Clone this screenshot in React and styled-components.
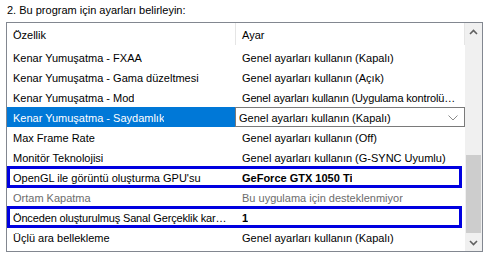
import React from "react"
import styled, { createGlobalStyle } from "styled-components"

const GlobalStyle = createGlobalStyle`
  body {
    margin: 0;
    background: #fff;
    font-family: "Liberation Sans", Arial, sans-serif;
    font-size: 11px;
    color: #000;
  }
`

const rows = [
  { name: "Kenar Yumuşatma - FXAA", value: "Genel ayarları kullanın (Kapalı)" },
  { name: "Kenar Yumuşatma - Gama düzeltmesi", value: "Genel ayarları kullanın (Açık)" },
  { name: "Kenar Yumuşatma - Mod", value: "Genel ayarları kullanın (Uygulama kontrolü…" },
  { name: "Kenar Yumuşatma - Saydamlık", value: "Genel ayarları kullanın (Kapalı)", selected: true },
  { name: "Max Frame Rate", value: "Genel ayarları kullanın (Off)" },
  { name: "Monitör Teknolojisi", value: "Genel ayarları kullanın (G-SYNC Uyumlu)" },
  { name: "OpenGL ile görüntü oluşturma GPU'su", value: "GeForce GTX 1050 Ti", bold: true, marked: true },
  { name: "Ortam Kapatma", value: "Bu uygulama için desteklenmiyor", disabled: true },
  { name: "Önceden oluşturulmuş Sanal Gerçeklik kar…", value: "1", bold: true, marked: true },
  { name: "Üçlü ara bellekleme", value: "Genel ayarları kullanın (Kapalı)" },
]

const Page = styled.div`
  padding: 3px 10px 0 6px;
`

const Title = styled.div`
  height: 19px;
  line-height: 14px;
  padding-left: 1px;
  box-sizing: border-box;
`

const ListBox = styled.div`
  width: 477px;
  height: 230px;
  box-sizing: border-box;
  border: 1px solid #828790;
  display: flex;
  background: #fff;
`

const Table = styled.div`
  flex: 1;
  min-width: 0;
  display: flex;
  flex-direction: column;
`

const HeaderRow = styled.div`
  display: grid;
  grid-template-columns: 229px 229px;
  height: 24px;
`

const HeaderCell = styled.div`
  display: flex;
  align-items: center;
  padding: 1px 0 0 6px;
  box-sizing: border-box;
  border-right: 1px solid #e5e5e5;
  margin-bottom: 2px;
`

const Row = styled.div`
  position: relative;
  display: grid;
  grid-template-columns: 229px 229px;
  height: 20px;
  color: ${(p) => (p.disabled ? "#6d6d6d" : "#000")};

  &::after {
    content: "";
    display: ${(p) => (p.marked ? "block" : "none")};
    position: absolute;
    left: 0;
    right: 3px;
    top: -1px;
    bottom: -1px;
    border: 3px solid #0000e0;
    pointer-events: none;
  }
`

const Cell = styled.div`
  min-width: 0;
  height: 100%;
  box-sizing: border-box;
  padding: 2px 1px 0 6px;
  display: flex;
  align-items: center;
`

const Text = styled.span`
  white-space: nowrap;
  overflow: hidden;
  text-overflow: ellipsis;
  letter-spacing: ${(p) => (p.tight ? "-0.15px" : "normal")};
`

const NameCell = styled(Cell)`
  background: ${(p) => (p.selected ? "#0078d7" : "transparent")};
  color: ${(p) => (p.selected ? "#fff" : "inherit")};
`

const ValueCell = styled(Cell)`
  font-weight: ${(p) => (p.bold ? "bold" : "normal")};
`

const Combo = styled.div`
  min-width: 0;
  height: 100%;
  margin-left: -1px;
  box-sizing: border-box;
  border: 1px solid #7a7a7a;
  display: flex;
  align-items: center;
  justify-content: space-between;
  padding: 1px 6px 0 3px;
`

const ScrollBar = styled.div`
  width: 17px;
  background: #f0f0f0;
  display: flex;
  flex-direction: column;
`

const ArrowButton = styled.div`
  height: 17px;
  display: flex;
  align-items: center;
  justify-content: center;
`

const Track = styled.div`
  flex: 1;
  display: flex;
  flex-direction: column;
  justify-content: flex-end;
  padding-bottom: 1px;
`

const Thumb = styled.div`
  height: 78px;
  margin: 0 1px;
  background: #cdcdcd;
`

const Chevron = ({ up }) => (
  <svg width="9" height="6" viewBox="0 0 9 6">
    <polyline
      points={up ? "1,5 4.5,1.5 8,5" : "1,1 4.5,4.5 8,1"}
      fill="none"
      stroke="#606060"
      strokeWidth="1.6"
    />
  </svg>
)

const ComboChevron = () => (
  <svg width="10" height="6" viewBox="0 0 10 6">
    <polyline points="0.5,0.5 5,5 9.5,0.5" fill="none" stroke="#8a8a8a" strokeWidth="1" />
  </svg>
)

export default function App() {
  return (
    <Page>
      <GlobalStyle />
      <Title>2. Bu program için ayarları belirleyin:</Title>
      <ListBox>
        <Table>
          <HeaderRow>
            <HeaderCell>Özellik</HeaderCell>
            <HeaderCell>Ayar</HeaderCell>
          </HeaderRow>
          {rows.map((r) => (
            <Row key={r.name} disabled={r.disabled} marked={r.marked}>
              <NameCell selected={r.selected}>
                <Text tight={r.name.endsWith("…")}>{r.name}</Text>
              </NameCell>
              {r.selected ? (
                <Combo>
                  <Text>{r.value}</Text>
                  <ComboChevron />
                </Combo>
              ) : (
                <ValueCell bold={r.bold}>
                  <Text tight={r.value.endsWith("…")}>{r.value}</Text>
                </ValueCell>
              )}
            </Row>
          ))}
        </Table>
        <ScrollBar>
          <ArrowButton>
            <Chevron up />
          </ArrowButton>
          <Track>
            <Thumb />
          </Track>
          <ArrowButton>
            <Chevron />
          </ArrowButton>
        </ScrollBar>
      </ListBox>
    </Page>
  )
}
